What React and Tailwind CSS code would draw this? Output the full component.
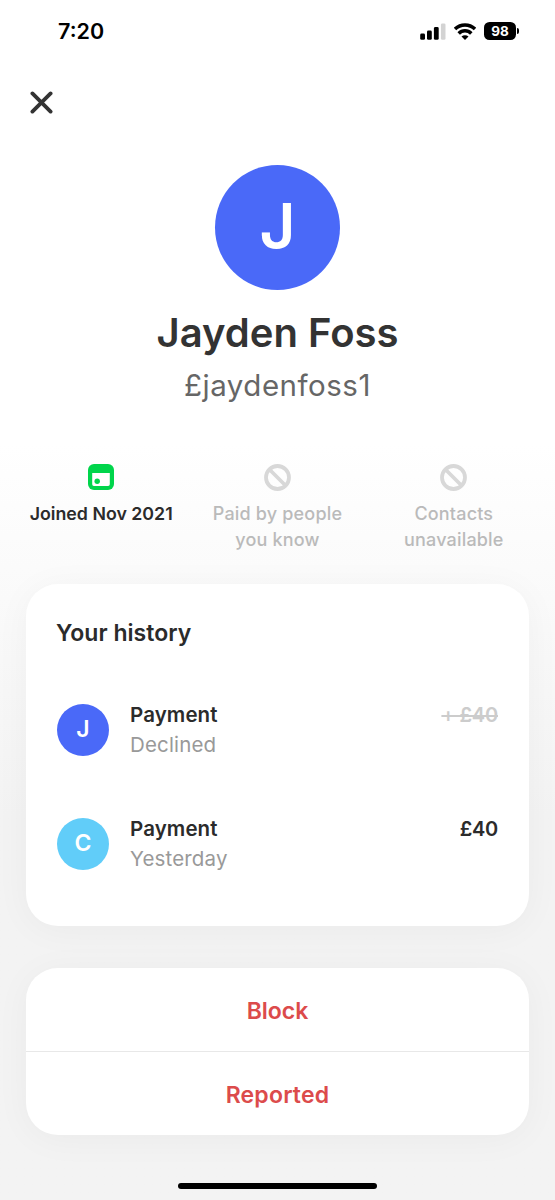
import React from 'react';

const stats = [
  { id: 'joined', lines: ['Joined Nov 2021'], active: true },
  { id: 'paid', lines: ['Paid by people', 'you know'], active: false },
  { id: 'contacts', lines: ['Contacts', 'unavailable'], active: false },
];

const history = [
  { id: 1, initial: 'J', color: 'bg-[#4a69f8]', title: 'Payment', status: 'Declined', amount: '+ £40', declined: true },
  { id: 2, initial: 'C', color: 'bg-[#61cdf9]', title: 'Payment', status: 'Yesterday', amount: '£40', declined: false },
];

const CalendarIcon = () => (
  <svg className="w-[26px] h-[26px]" viewBox="0 0 26 26">
    <rect width="26" height="26" rx="6" fill="#00d54b" />
    <path d="M4.2 9h17.6v11.3a1.7 1.7 0 0 1-1.7 1.7H5.9a1.7 1.7 0 0 1-1.7-1.7z" fill="#fff" />
    <circle cx="9.2" cy="17.3" r="2.7" fill="#00d54b" />
  </svg>
);

const BlockedIcon = () => (
  <svg className="w-[27px] h-[27px]" viewBox="0 0 27 27" fill="none" stroke="#d8d8d8" strokeWidth="3.8">
    <circle cx="13.5" cy="13.5" r="11.5" />
    <path d="M5.5 5.5l16 16" />
  </svg>
);

const StatusBar = () => (
  <div className="h-[62px] pl-[58px] pr-[35px] flex items-center justify-between">
    <span className="text-[21.5px] leading-[30px] font-semibold text-black">7:20</span>
    <div className="flex items-center">
      <svg className="w-[26px] h-[17px]" viewBox="0 0 26 17">
        <rect x="0.2" y="10.6" width="4.8" height="6.2" rx="1.4" />
        <rect x="7" y="7.6" width="4.8" height="9.2" rx="1.4" />
        <rect x="13.9" y="4.1" width="4.8" height="12.7" rx="1.4" />
        <rect x="20.9" y="0.4" width="4.6" height="16.4" rx="1.4" fill="#d3d3d3" />
      </svg>
      <svg className="w-[22px] h-[17px] ml-[8px]" viewBox="0 0 22 17" fill="none" stroke="#000" strokeWidth="3.5">
        <path d="M1 6a14.2 14.2 0 0 1 20 0" />
        <path d="M4.7 10.4a8.9 8.9 0 0 1 12.6 0" />
        <path d="M11 17l-3.5-3.4a5 5 0 0 1 7 0z" fill="#000" stroke="none" />
      </svg>
      <div className="ml-[8px] w-[32px] h-[18px] rounded-[5.5px] bg-black text-white text-[13.5px] leading-[18px] font-bold text-center">98</div>
      <div className="ml-[1px] mr-px w-[2px] h-[6px] rounded-r-full bg-black" />
    </div>
  </div>
);

const HistoryRow = ({ item }) => (
  <div className="h-[114px] flex items-center">
    <div className={`w-[52px] h-[52px] rounded-full flex items-center justify-center text-white text-[23px] font-semibold ${item.color}`}>
      {item.initial}
    </div>
    <div className="ml-[21px] flex-1">
      <p className="text-[20.5px] leading-[30px] tracking-[0.1px] font-semibold text-[#2b2b2b]">{item.title}</p>
      <p className="text-[20.5px] leading-[30px] tracking-[0.15px] text-[#999999]">{item.status}</p>
    </div>
    <p className={`self-start mt-[27px] text-[20px] leading-[30px] font-semibold ${item.declined ? 'text-[#cccccc] line-through decoration-[1.5px] tracking-[-0.2px]' : 'text-[#2b2b2b] tracking-[-0.3px]'}`}>
      {item.amount}
    </p>
  </div>
);

const App = () => {
  return (
    <div className="w-[555px] h-[1200px] overflow-hidden flex flex-col bg-linear-to-b from-white from-[37%] to-[#f3f3f3] to-[68%] font-['Inter','Liberation_Sans',sans-serif]">
      <StatusBar />

      <button className="ml-[30px] mt-[29px] w-[23px] h-[23px]" aria-label="Close">
        <svg viewBox="0 0 23 23" fill="none" stroke="#333" strokeWidth="3.8" strokeLinecap="round">
          <path d="M2.4 2.4l18.2 18.2M20.6 2.4L2.4 20.6" />
        </svg>
      </button>

      {/* Profile */}
      <div className="mt-[50.5px] flex flex-col items-center">
        <div className="w-[125px] h-[125px] pb-[3px] rounded-full bg-[#4a69f8] flex items-center justify-center text-white text-[62px] font-semibold">J</div>
        <h1 className="mt-[16.5px] text-[40px] leading-[54px] font-semibold text-[#333]">Jayden Foss</h1>
        <p className="text-[29.5px] leading-[51px] tracking-[0.5px] text-[#666]">£jaydenfoss1</p>
      </div>

      {/* Stats */}
      <div className="mt-[52.5px] h-[120.5px] mx-[13px] grid grid-cols-3">
        {stats.map((stat) => (
          <div key={stat.id} className="flex flex-col items-center">
            <div className="h-[27px] flex items-center">
              {stat.active ? <CalendarIcon /> : <BlockedIcon />}
            </div>
            <div className={`mt-[10.5px] leading-[26px] text-center whitespace-nowrap ${stat.active ? 'text-[17.8px] font-semibold text-[#2b2b2b]' : 'text-[18px] tracking-[0.18px] font-medium text-[#bababa]'}`}>
              {stat.lines.map((line) => <p key={line}>{line}</p>)}
            </div>
          </div>
        ))}
      </div>

      {/* History card */}
      <div className="mx-[26px] h-[342px] px-[31px] pt-[34px] rounded-[32px] bg-white shadow-[0_4px_36px_rgba(0,0,0,0.04)]">
        <h2 className="-ml-px text-[23px] leading-[30px] tracking-[0.05px] font-semibold text-[#2b2b2b]">Your history</h2>
        <div className="mt-[24.5px]">
          {history.map((item) => <HistoryRow key={item.id} item={item} />)}
        </div>
      </div>

      {/* Actions */}
      <div className="mx-[26px] mt-[41.5px] h-[167px] rounded-[32px] bg-white shadow-[0_4px_36px_rgba(0,0,0,0.04)] flex flex-col text-[23px] font-semibold text-[#dc4b4b]">
        <button className="h-[84px] pt-[5px] border-b-[1.5px] border-[#e8e8e8]">Block</button>
        <button className="flex-1 pt-[5px] tracking-[0.2px]">Reported</button>
      </div>

      <div className="mt-[48.5px] mx-auto w-[199px] h-[6px] shrink-0 rounded-full bg-black" />
    </div>
  );
};

export default App;
